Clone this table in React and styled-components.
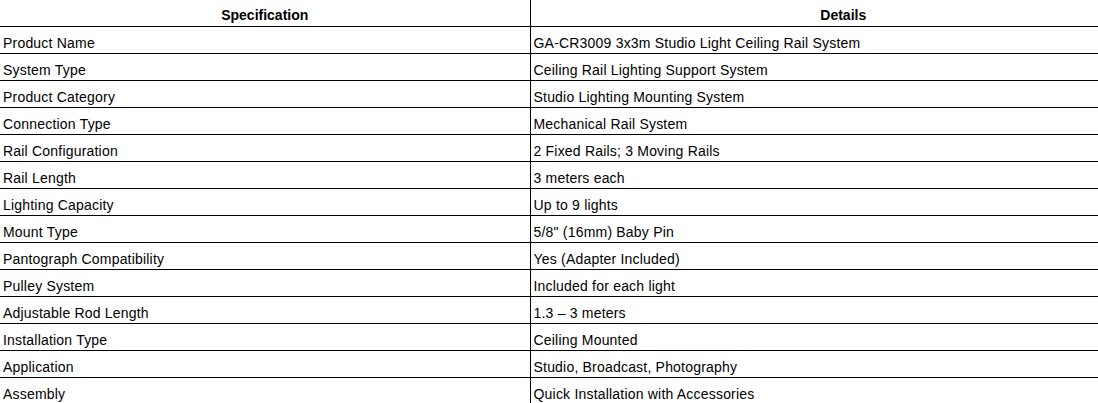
import React from "react";
import styled, { createGlobalStyle } from "styled-components";

const GlobalStyle = createGlobalStyle`
  html, body { margin: 0; padding: 0; background: #fff; overflow: hidden; }
  body { font-family: "Liberation Sans", Arial, sans-serif; color: #000; }
`;

const Table = styled.table`
  width: 1156px;
  border-collapse: collapse;
  table-layout: fixed;
  font-family: "Liberation Sans", Arial, sans-serif;
  font-size: 14px;
  line-height: 16px;
`;

const HeadCell = styled.th`
  padding: 7px 3px 3px;
  font-weight: bold;
  text-align: center;
  border-bottom: 1px solid #000;
  border-right: ${(p) => (p.$first ? "1px solid #000" : "none")};
`;

const Cell = styled.td`
  padding: 8px 3px 2px;
  text-align: left;
  white-space: nowrap;
  letter-spacing: 0.2px;
  border-bottom: 1px solid #000;
  border-right: ${(p) => (p.$first ? "1px solid #000" : "none")};
`;

const rows = [
  ["Product Name", "GA-CR3009 3x3m Studio Light Ceiling Rail System"],
  ["System Type", "Ceiling Rail Lighting Support System"],
  ["Product Category", "Studio Lighting Mounting System"],
  ["Connection Type", "Mechanical Rail System"],
  ["Rail Configuration", "2 Fixed Rails; 3 Moving Rails"],
  ["Rail Length", "3 meters each"],
  ["Lighting Capacity", "Up to 9 lights"],
  ["Mount Type", "5/8\" (16mm) Baby Pin"],
  ["Pantograph Compatibility", "Yes (Adapter Included)"],
  ["Pulley System", "Included for each light"],
  ["Adjustable Rod Length", "1.3 – 3 meters"],
  ["Installation Type", "Ceiling Mounted"],
  ["Application", "Studio, Broadcast, Photography"],
  ["Assembly", "Quick Installation with Accessories"],
];

export default function App() {
  return (
    <>
      <GlobalStyle />
      <Table>
        <colgroup>
          <col style={{ width: "530px" }} />
          <col />
        </colgroup>
        <thead>
          <tr>
            <HeadCell $first>Specification</HeadCell>
            <HeadCell>Details</HeadCell>
          </tr>
        </thead>
        <tbody>
          {rows.map(([k, v]) => (
            <tr key={k}>
              <Cell $first>{k}</Cell>
              <Cell>{v}</Cell>
            </tr>
          ))}
        </tbody>
      </Table>
    </>
  );
}
